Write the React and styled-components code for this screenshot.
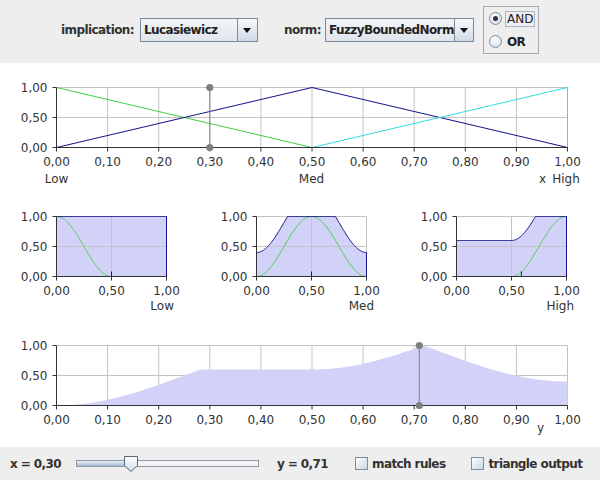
import React from "react";
import styled, { createGlobalStyle } from "styled-components";

const GlobalStyle = createGlobalStyle`
  html, body { margin: 0; padding: 0; }
  body { background: #eeeeee; font-family: "DejaVu Sans", "Liberation Sans", sans-serif; }
`;

const GREEN = "#3fd23f";
const NAVY = "#12128c";
const CYAN = "#30dede";
const LAVENDER = "#d2d2f8";
const MARK = "#7f7f7f";

const Frame = styled.div`
  width: 600px;
  height: 480px;
  display: flex;
  flex-direction: column;
  overflow: hidden;
  background: #eeeeee;
`;

const Toolbar = styled.div`
  flex: none;
  height: 63px;
  box-sizing: border-box;
  padding: 6px 0 9px;
  display: flex;
  align-items: center;
  justify-content: center;
`;

const BoldText = styled.span`
  font: bold 12px "DejaVu Sans", sans-serif;
  letter-spacing: -0.6px;
  color: #333333;
  white-space: pre;
  margin-left: ${(p) => p.$ml || 0}px;
`;

const Combo = styled.div`
  display: flex;
  width: ${(p) => p.$w}px;
  height: 24px;
  box-sizing: border-box;
  margin-left: ${(p) => p.$ml}px;
  border: 1px solid #7a8a99;
  background: linear-gradient(#f2f5f8, #dfe5ec);
`;

const ComboValue = styled.div`
  flex: 1;
  display: flex;
  align-items: center;
  padding-left: 3px;
  font: bold 12px "DejaVu Sans", sans-serif;
  letter-spacing: -0.6px;
  color: #222222;
`;

const ComboButton = styled.div`
  width: 19px;
  border-left: 1px solid #7a8a99;
  display: flex;
  align-items: center;
  justify-content: center;
  background: linear-gradient(#f7f9fb, #cfdae6);
`;

const Caret = styled.span`
  width: 0;
  height: 0;
  border-left: 4px solid transparent;
  border-right: 4px solid transparent;
  border-top: 5px solid #111111;
`;

const RadioBox = styled.div`
  margin-left: 9px;
  width: 56px;
  height: 48px;
  box-sizing: border-box;
  border: 1px solid #a9a9a9;
  display: flex;
  flex-direction: column;
  justify-content: space-around;
  padding-left: 5px;
`;

const RadioRow = styled.div`
  display: flex;
  align-items: center;
  gap: 3px;
`;

const RadioDot = styled.span`
  width: 13px;
  height: 13px;
  box-sizing: border-box;
  border-radius: 50%;
  border: 1px solid #7f8e9c;
  background: radial-gradient(circle at 40% 35%, #ffffff, #cbd7e4);
  display: flex;
  align-items: center;
  justify-content: center;
  &::after {
    content: "";
    width: 5px;
    height: 5px;
    border-radius: 50%;
    background: ${(p) => (p.$on ? "#333333" : "transparent")};
  }
`;

const RadioLabel = styled.span`
  font: ${(p) => (p.$bold ? "bold" : "normal")} 12px "DejaVu Sans", sans-serif;
  letter-spacing: ${(p) => (p.$bold ? "-0.6px" : "0")};
  color: #222222;
  padding: 0 1px;
  border: 1px solid ${(p) => (p.$focus ? "#a3b8cc" : "transparent")};
`;

const ChartArea = styled.div`
  flex: 1;
  background: #ffffff;
  display: flex;
  flex-direction: column;
`;

const Row = styled.div`
  display: flex;
`;

const ChartSvg = styled.svg`
  display: block;
  flex: none;
  font-family: "DejaVu Sans", sans-serif;
  font-size: 12px;
`;

const StatusBar = styled.div`
  flex: none;
  height: 33px;
  box-sizing: border-box;
  padding-left: 10px;
  display: flex;
  align-items: center;
`;

const Slider = styled.div`
  position: relative;
  width: 183px;
  height: 16px;
  margin-left: 15px;
  display: flex;
  align-items: center;
`;

const Track = styled.div`
  width: 100%;
  height: 7px;
  box-sizing: border-box;
  border: 1px solid #8b9aa9;
  background: #f4f4f4;
  display: flex;
`;

const TrackFill = styled.div`
  height: 100%;
  background: linear-gradient(#e9eff6, #a6bad3);
`;

const Thumb = styled.svg`
  position: absolute;
  top: 0;
  display: block;
`;

const CheckBox = styled.span`
  width: 13px;
  height: 13px;
  box-sizing: border-box;
  margin-left: ${(p) => p.$ml}px;
  border: 1px solid #7f8e9c;
  background: linear-gradient(135deg, #ffffff, #cbd7e4);
`;

const TAU = Math.PI * 2;
const muL = (y) => (y < 0.5 ? (1 + Math.cos(TAU * y)) / 2 : 0);
const muM = (y) => (1 - Math.cos(TAU * y)) / 2;
const muH = (y) => (y < 0.5 ? 0 : (1 - Math.cos(TAU * (y - 0.5))) / 2);
const blueM = (y) => Math.min(1, 0.4 + muM(y));
const blueH = (y) => Math.min(1, 0.6 + muH(y));
const agg = (y) => Math.max(0, blueM(y) + blueH(y) - 1);

const TENTHS = [0, 0.1, 0.2, 0.3, 0.4, 0.5, 0.6, 0.7, 0.8, 0.9, 1];
const HALVES = [0, 0.5, 1];
const fmt = (v) => v.toFixed(2).replace(".", ",");

function pts(f, a, b, sx, sy, n = 160) {
  const out = [];
  for (let i = 0; i <= n; i++) {
    const v = a + ((b - a) * i) / n;
    out.push(`${sx(v).toFixed(2)},${sy(f(v)).toFixed(2)}`);
  }
  return out;
}

function Chart({ width, height, box, xTicks, fill, gridOverFill, draw, marker, labels }) {
  const { x, y, w, h } = box;
  const sx = (v) => x + 0.5 + v * w;
  const sy = (v) => y + 0.5 + (1 - v) * h;
  const bottom = y + h;
  const grid = (
    <g stroke="#c4c4c4" strokeWidth="1" fill="none">
      {xTicks
        .filter((v) => v > 0)
        .map((v) => (
          <line key={"gx" + v} x1={sx(v)} x2={sx(v)} y1={sy(1)} y2={sy(0)} />
        ))}
      {[0.5, 1].map((v) => (
        <line key={"gy" + v} x1={sx(0)} x2={sx(1)} y1={sy(v)} y2={sy(v)} />
      ))}
    </g>
  );
  const fillEl = fill ? (
    <polygon
      points={[`${sx(0)},${sy(0)}`, ...pts(fill, 0, 1, sx, sy), `${sx(1)},${sy(0)}`].join(" ")}
      fill={LAVENDER}
    />
  ) : null;
  return (
    <ChartSvg width={width} height={height} viewBox={`0 0 ${width} ${height}`}>
      {gridOverFill ? fillEl : grid}
      {gridOverFill ? grid : fillEl}
      <g fill="none" strokeWidth="1">{draw && draw(sx, sy)}</g>
      <g stroke="#333333" strokeWidth="1">
        <line x1={sx(0)} x2={sx(0)} y1={sy(1)} y2={sy(0)} />
        <line x1={sx(0)} x2={sx(1)} y1={sy(0)} y2={sy(0)} />
        {[0, 0.5, 1].map((v) => (
          <line key={"ty" + v} x1={sx(0) - 4} x2={sx(0)} y1={sy(v)} y2={sy(v)} />
        ))}
        {xTicks.map((v) => (
          <line key={"tx" + v} x1={sx(v)} x2={sx(v)} y1={sy(0)} y2={sy(0) + 4} />
        ))}
      </g>
      {marker != null && (
        <g fill={MARK} stroke={MARK}>
          <line x1={sx(marker)} x2={sx(marker)} y1={sy(1)} y2={sy(0)} strokeWidth="1" />
          <circle cx={sx(marker)} cy={sy(1)} r="3.6" stroke="none" />
          <circle cx={sx(marker)} cy={sy(0)} r="3.6" stroke="none" />
        </g>
      )}
      <g fill="#333333">
        {[0, 0.5, 1].map((v) => (
          <text key={"ly" + v} x={x - 8.5} y={sy(v) + 4.5} textAnchor="end">
            {fmt(v)}
          </text>
        ))}
        {xTicks.map((v) => (
          <text key={"lx" + v} x={sx(v)} y={bottom + 19} textAnchor="middle">
            {fmt(v)}
          </text>
        ))}
        {labels &&
          labels.map((l) => (
            <text key={l.text} x={l.x} y={bottom + l.dy} textAnchor={l.anchor || "middle"}>
              {l.text}
            </text>
          ))}
      </g>
    </ChartSvg>
  );
}

const SMALL_BOX = { x: 56, y: 28, w: 110, h: 60 };

function SmallChart({ name, fill, green, greenFrom, greenTo, edges, tick }) {
  return (
    <Chart
      width={200}
      height={132}
      box={SMALL_BOX}
      xTicks={HALVES}
      fill={fill}
      gridOverFill
      labels={[{ text: name, x: 174, dy: 34, anchor: "end" }]}
      draw={(sx, sy) => (
        <>
          <polyline points={pts(green, greenFrom, greenTo, sx, sy).join(" ")} stroke={GREEN} />
          <polyline points={pts(fill, 0, 1, sx, sy).join(" ")} stroke={NAVY} />
          {edges.map((e, i) => (
            <line key={i} x1={sx(e.x)} x2={sx(e.x)} y1={sy(0)} y2={sy(e.top)} stroke={NAVY} />
          ))}
          <line x1={sx(tick)} x2={sx(tick)} y1={sy(0)} y2={sy(0) - 5} stroke={NAVY} />
        </>
      )}
    />
  );
}

export default function App() {
  const sliderValue = 0.3;
  return (
    <Frame>
      <GlobalStyle />
      <Toolbar>
        <BoldText>implication:</BoldText>
        <Combo $w={118} $ml={6}>
          <ComboValue>Lucasiewicz</ComboValue>
          <ComboButton>
            <Caret />
          </ComboButton>
        </Combo>
        <BoldText $ml={26}>norm:</BoldText>
        <Combo $w={149} $ml={4}>
          <ComboValue>FuzzyBoundedNorm</ComboValue>
          <ComboButton>
            <Caret />
          </ComboButton>
        </Combo>
        <RadioBox>
          <RadioRow>
            <RadioDot $on />
            <RadioLabel $focus>AND</RadioLabel>
          </RadioRow>
          <RadioRow>
            <RadioDot />
            <RadioLabel $bold>OR</RadioLabel>
          </RadioRow>
        </RadioBox>
      </Toolbar>

      <ChartArea>
        <Chart
          width={600}
          height={125}
          box={{ x: 56, y: 24, w: 511, h: 60 }}
          xTicks={TENTHS}
          marker={0.3}
          labels={[
            { text: "Low", x: 56.5, dy: 36 },
            { text: "Med", x: 311.5, dy: 36 },
            { text: "High", x: 566, dy: 36 },
            { text: "x", x: 539, dy: 36, anchor: "start" },
          ]}
          draw={(sx, sy) => (
            <>
              <polyline points={`${sx(0)},${sy(1)} ${sx(0.5)},${sy(0)}`} stroke={GREEN} />
              <polyline points={`${sx(0)},${sy(0)} ${sx(0.5)},${sy(1)} ${sx(1)},${sy(0)}`} stroke={NAVY} />
              <polyline points={`${sx(0.5)},${sy(0)} ${sx(1)},${sy(1)} ${sx(1)},${sy(0)}`} stroke={CYAN} />
            </>
          )}
        />
        <Row>
          <SmallChart
            name="Low"
            fill={() => 1}
            green={muL}
            greenFrom={0}
            greenTo={0.5}
            edges={[{ x: 1, top: 1 }]}
            tick={0.5}
          />
          <SmallChart
            name="Med"
            fill={blueM}
            green={muM}
            greenFrom={0}
            greenTo={1}
            edges={[{ x: 0, top: 0.4 }, { x: 1, top: 0.4 }]}
            tick={0.5}
          />
          <SmallChart
            name="High"
            fill={blueH}
            green={muH}
            greenFrom={0.5}
            greenTo={1}
            edges={[{ x: 1, top: 1 }]}
            tick={0.59}
          />
        </Row>
        <Chart
          width={600}
          height={127}
          box={{ x: 56, y: 25, w: 511, h: 60 }}
          xTicks={TENTHS}
          fill={agg}
          marker={0.71}
          labels={[{ text: "y", x: 537, dy: 27, anchor: "start" }]}
        />
      </ChartArea>

      <StatusBar>
        <BoldText>x = 0,30</BoldText>
        <Slider>
          <Track>
            <TrackFill style={{ width: `${sliderValue * 100}%` }} />
          </Track>
          <Thumb width="15" height="16" viewBox="0 0 15 16" style={{ left: `${sliderValue * 183 - 7}px` }}>
            <defs>
              <linearGradient id="thumbGrad" x1="0" y1="0" x2="0" y2="1">
                <stop offset="0" stopColor="#ffffff" />
                <stop offset="1" stopColor="#d3dde8" />
              </linearGradient>
            </defs>
            <path d="M0.5 0.5 H13.5 V9.5 L7 15.5 L0.5 9.5 Z" fill="url(#thumbGrad)" stroke="#55697d" />
          </Thumb>
        </Slider>
        <BoldText $ml={18}>y = 0,71</BoldText>
        <CheckBox $ml={27} />
        <BoldText $ml={4}>match rules</BoldText>
        <CheckBox $ml={26} />
        <BoldText $ml={4}>triangle output</BoldText>
      </StatusBar>
    </Frame>
  );
}
